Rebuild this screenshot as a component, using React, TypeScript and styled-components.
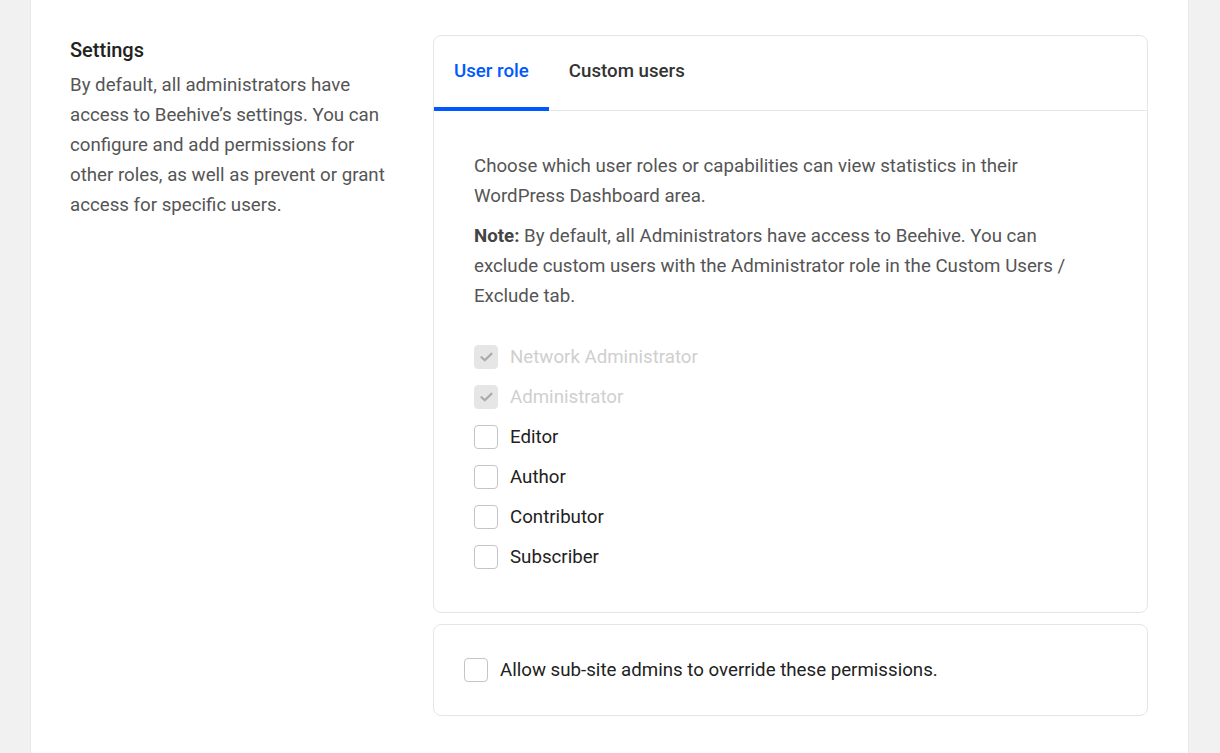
import { useState } from 'react';
import styled, { createGlobalStyle } from 'styled-components';

const GlobalStyle = createGlobalStyle`
  html, body {
    margin: 0;
    padding: 0;
    background: #f1f1f1;
    font-family: Roboto, "Noto Sans", Arial, sans-serif;
    -webkit-font-smoothing: antialiased;
  }
  * { box-sizing: border-box; }
`;

const Page = styled.div`
  margin: 0 31px 0 30px;
  min-height: 100vh;
  background: #fff;
  border-left: 1px solid #e8e8e8;
  border-right: 1px solid #e8e8e8;
  padding: 35px 40px 40px 39px;
`;

const Row = styled.div`
  display: grid;
  grid-template-columns: 320px 1fr;
  gap: 43px;
`;

const Aside = styled.div`
  color: #555;
`;

const Title = styled.h3`
  margin: 0 0 5px;
  font-size: 20px;
  line-height: 30px;
  font-weight: 500;
  color: #222;
`;

const Description = styled.p`
  margin: 0;
  font-size: 18.7px;
  line-height: 30px;
  color: #555;
`;

const Stack = styled.div`
  display: flex;
  flex-direction: column;
  gap: 11px;
`;

const Card = styled.div`
  background: #fff;
  border: 1px solid #e6e6e6;
  border-radius: 8px;
  overflow: hidden;
`;

const TabList = styled.div`
  display: flex;
  height: 75px;
  border-bottom: 1px solid #e6e6e6;
`;

const Tab = styled.button<{ $active?: boolean }>`
  position: relative;
  border: 0;
  background: none;
  padding: 0 20px 5px;
  margin: 0;
  font-family: inherit;
  font-size: 18.7px;
  font-weight: 500;
  color: ${(p) => (p.$active ? '#0059ff' : '#333')};
  cursor: pointer;

  &::after {
    content: '';
    position: absolute;
    left: 0;
    right: 0;
    bottom: -1px;
    height: 4px;
    background: ${(p) => (p.$active ? '#0059ff' : 'transparent')};
  }
`;

const TabBody = styled.div`
  padding: 40px 50px 35px 40px;
`;

const Text = styled.p`
  margin: 0 0 10px;
  font-size: 18.7px;
  line-height: 30px;
  color: #555;

  strong {
    font-weight: 700;
    color: #444;
  }
`;

const Checklist = styled.div`
  margin-top: 26px;
  display: flex;
  flex-direction: column;
`;

const Option = styled.label<{ $disabled?: boolean; $height?: number }>`
  display: flex;
  align-items: center;
  gap: 12px;
  height: ${(p) => p.$height ?? 40}px;
  font-size: 18.7px;
  color: ${(p) => (p.$disabled ? '#cfcfcf' : '#222')};
  cursor: ${(p) => (p.$disabled ? 'default' : 'pointer')};
`;

const Box = styled.span<{ $checked?: boolean; $disabled?: boolean }>`
  display: grid;
  place-items: center;
  flex: none;
  width: 24px;
  height: 24px;
  border-radius: 4px;
  border: 1px solid ${(p) => (p.$disabled ? '#e6e6e6' : p.$checked ? '#0059ff' : '#c4c4c4')};
  background: ${(p) => (p.$disabled ? '#e6e6e6' : p.$checked ? '#0059ff' : '#fff')};
`;

const FooterCard = styled(Card)`
  padding: 30px 30px;
`;

function Check({ color }: { color: string }) {
  return (
    <svg width="13" height="10" viewBox="0 0 13 10" fill="none">
      <path d="M1.5 5.2 4.8 8.3 11.5 1.7" stroke={color} strokeWidth="2.2" strokeLinecap="round" strokeLinejoin="round" />
    </svg>
  );
}

function Checkbox({
  label,
  checked,
  disabled,
  height,
  onToggle,
}: {
  label: string;
  checked: boolean;
  disabled?: boolean;
  height?: number;
  onToggle?: () => void;
}) {
  return (
    <Option $disabled={disabled} $height={height} onClick={disabled ? undefined : onToggle}>
      <Box $checked={checked} $disabled={disabled}>
        {checked && <Check color={disabled ? '#aaa' : '#fff'} />}
      </Box>
      {label}
    </Option>
  );
}

const roles = [
  { label: 'Network Administrator', locked: true },
  { label: 'Administrator', locked: true },
  { label: 'Editor' },
  { label: 'Author' },
  { label: 'Contributor' },
  { label: 'Subscriber' },
];

export default function App() {
  const [tab, setTab] = useState<'roles' | 'users'>('roles');
  const [checked, setChecked] = useState<Record<string, boolean>>({});
  const [override, setOverride] = useState(false);

  return (
    <>
      <GlobalStyle />
      <Page>
        <Row>
          <Aside>
            <Title>Settings</Title>
            <Description>
              By default, all administrators have access to Beehive’s settings. You can configure and
              add permissions for other roles, as well as prevent or grant access for specific users.
            </Description>
          </Aside>
          <Stack>
            <Card>
              <TabList>
                <Tab $active={tab === 'roles'} onClick={() => setTab('roles')}>
                  User role
                </Tab>
                <Tab $active={tab === 'users'} onClick={() => setTab('users')}>
                  Custom users
                </Tab>
              </TabList>
              <TabBody>
                <Text>
                  Choose which user roles or capabilities can view statistics in their WordPress
                  Dashboard area.
                </Text>
                <Text>
                  <strong>Note:</strong> By default, all Administrators have access to Beehive. You can
                  exclude custom users with the Administrator role in the Custom Users / Exclude tab.
                </Text>
                <Checklist>
                  {roles.map((r) => (
                    <Checkbox
                      key={r.label}
                      label={r.label}
                      disabled={r.locked}
                      checked={r.locked ? true : !!checked[r.label]}
                      onToggle={() => setChecked((c) => ({ ...c, [r.label]: !c[r.label] }))}
                    />
                  ))}
                </Checklist>
              </TabBody>
            </Card>
            <FooterCard>
              <Checkbox
                label="Allow sub-site admins to override these permissions."
                checked={override}
                height={30}
                onToggle={() => setOverride((v) => !v)}
              />
            </FooterCard>
          </Stack>
        </Row>
      </Page>
    </>
  );
}
